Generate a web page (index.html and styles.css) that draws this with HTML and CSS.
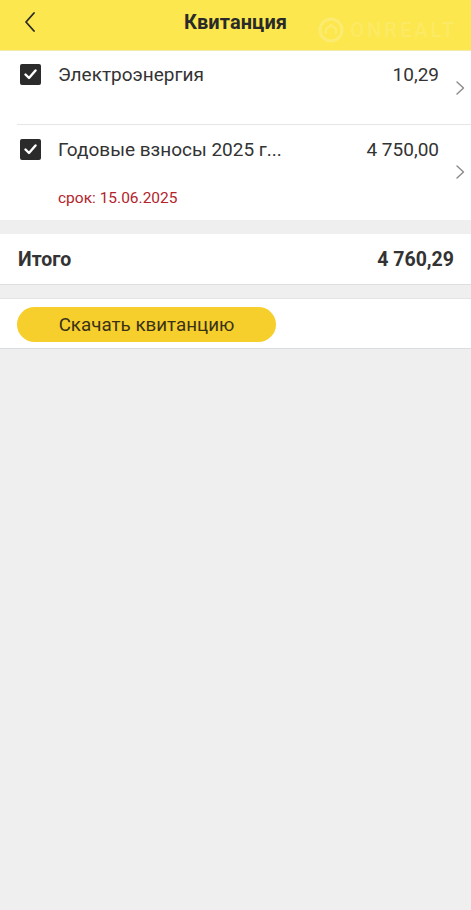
FILE: index.html
```html
<!DOCTYPE html>
<html lang="ru">
<head>
<meta charset="utf-8">
<link rel="stylesheet" href="styles.css">
</head>
<body>
<header class="topbar">
  <svg class="back" width="12" height="20" viewBox="0 0 12 20"><path d="M10 1 L2 10 L10 19" fill="none" stroke="#2a2a2a" stroke-width="1.8" stroke-linecap="round" stroke-linejoin="round"/></svg>
  <h1 class="title">Квитанция</h1>
  <div class="watermark">
    <svg width="26" height="26" viewBox="0 0 26 26"><circle cx="13" cy="13" r="11" fill="none" stroke="rgba(255,255,255,0.2)" stroke-width="3"/><path d="M8 17 V12 L13 8 L18 12 V17" fill="none" stroke="rgba(255,255,255,0.2)" stroke-width="2"/></svg>
    <span>ONREALT</span>
  </div>
</header>
<section class="list">
  <div class="item">
    <span class="check"><svg width="13" height="11" viewBox="0 0 13 11"><path d="M1.5 5.5 L5 9 L11.5 1.5" fill="none" stroke="#fff" stroke-width="2.4" stroke-linecap="round" stroke-linejoin="round"/></svg></span>
    <div class="item-body">
      <div class="item-line"><span class="name">Электроэнергия</span><span class="amount">10,29</span></div>
    </div>
    <svg class="chev" width="9" height="14" viewBox="0 0 9 14"><path d="M1 1 L7.5 7 L1 13" fill="none" stroke="#8a8a8a" stroke-width="1.4" stroke-linecap="round" stroke-linejoin="round"/></svg>
  </div>
  <div class="item item-last">
    <span class="check"><svg width="13" height="11" viewBox="0 0 13 11"><path d="M1.5 5.5 L5 9 L11.5 1.5" fill="none" stroke="#fff" stroke-width="2.4" stroke-linecap="round" stroke-linejoin="round"/></svg></span>
    <div class="item-body">
      <div class="item-line"><span class="name">Годовые взносы 2025 г...</span><span class="amount">4 750,00</span></div>
      <div class="due">срок: 15.06.2025</div>
    </div>
    <svg class="chev" width="9" height="14" viewBox="0 0 9 14"><path d="M1 1 L7.5 7 L1 13" fill="none" stroke="#8a8a8a" stroke-width="1.4" stroke-linecap="round" stroke-linejoin="round"/></svg>
  </div>
</section>
<section class="total">
  <span>Итого</span><span>4 760,29</span>
</section>
<section class="actions">
  <button class="download">Скачать квитанцию</button>
</section>
</body>
</html>
```
FILE: styles.css
```css
* { box-sizing: border-box; }
html, body { margin: 0; padding: 0; }
body {
  background: #efefef;
  font-family: Roboto, "Noto Sans", sans-serif;
  color: #2b2b2b;
  width: 471px;
  min-height: 910px;
}
.topbar {
  height: 51px;
  background: #fce74e;
  display: flex;
  align-items: center;
  justify-content: center;
  position: relative;
  border-bottom: 1px solid #f3eab0;
  padding-bottom: 6px;
}
.back { position: absolute; left: 24px; top: 12px; }
.title {
  margin: 0;
  font-size: 20px;
  font-weight: 700;
  color: #2a2a2a;
  letter-spacing: 0.1px;
}
.watermark {
  position: absolute;
  right: 14px;
  top: 17px;
  display: flex;
  align-items: center;
  gap: 6px;
  font-size: 20px;
  letter-spacing: 3px;
  color: rgba(255,255,255,0.13);
  font-weight: 500;
}
.list { background: #fff; }
.item {
  display: flex;
  align-items: flex-start;
  padding: 12px 0 0 20px;
  height: 73px;
  position: relative;
}
.item-last { height: 96px; border-top: 1px solid #e6e6e6; margin-left: 17px; padding-left: 3px; padding-top: 13px; }
.check {
  width: 21px; height: 21px;
  background: #2b2b2b;
  border-radius: 2px;
  display: flex; align-items: center; justify-content: center;
  flex: none;
  margin-top: 1px;
}
.item-body { flex: 1; margin-left: 17px; margin-right: 32px; }
.item-line {
  display: flex;
  justify-content: space-between;
  font-size: 19px;
  line-height: 24px;
  color: #333;
}
.due {
  margin-top: 27px;
  font-size: 15.5px;
  color: #b3232b;
}
.chev { position: absolute; right: 6px; top: 30px; }
.item-last .chev { top: 40px; }
.total {
  margin-top: 14px;
  background: #fff;
  height: 51px;
  display: flex;
  justify-content: space-between;
  align-items: center;
  padding: 0 17px 0 18px;
  font-size: 19.5px;
  font-weight: 700;
  color: #333;
  border-bottom: 1px solid #dedede;
}
.actions {
  margin-top: 13px;
  background: #fff;
  height: 51px;
  padding: 8px 17px 0;
  border-top: 1px solid #e4e4e4;
  border-bottom: 1px solid #dadde0;
}
.download {
  width: 259px;
  height: 35px;
  border: none;
  border-radius: 18px;
  background: #f6cf2c;
  font-family: Roboto, "Noto Sans", sans-serif;
  font-size: 18.8px;
  color: #3a3216;
  padding: 0;
}
```
